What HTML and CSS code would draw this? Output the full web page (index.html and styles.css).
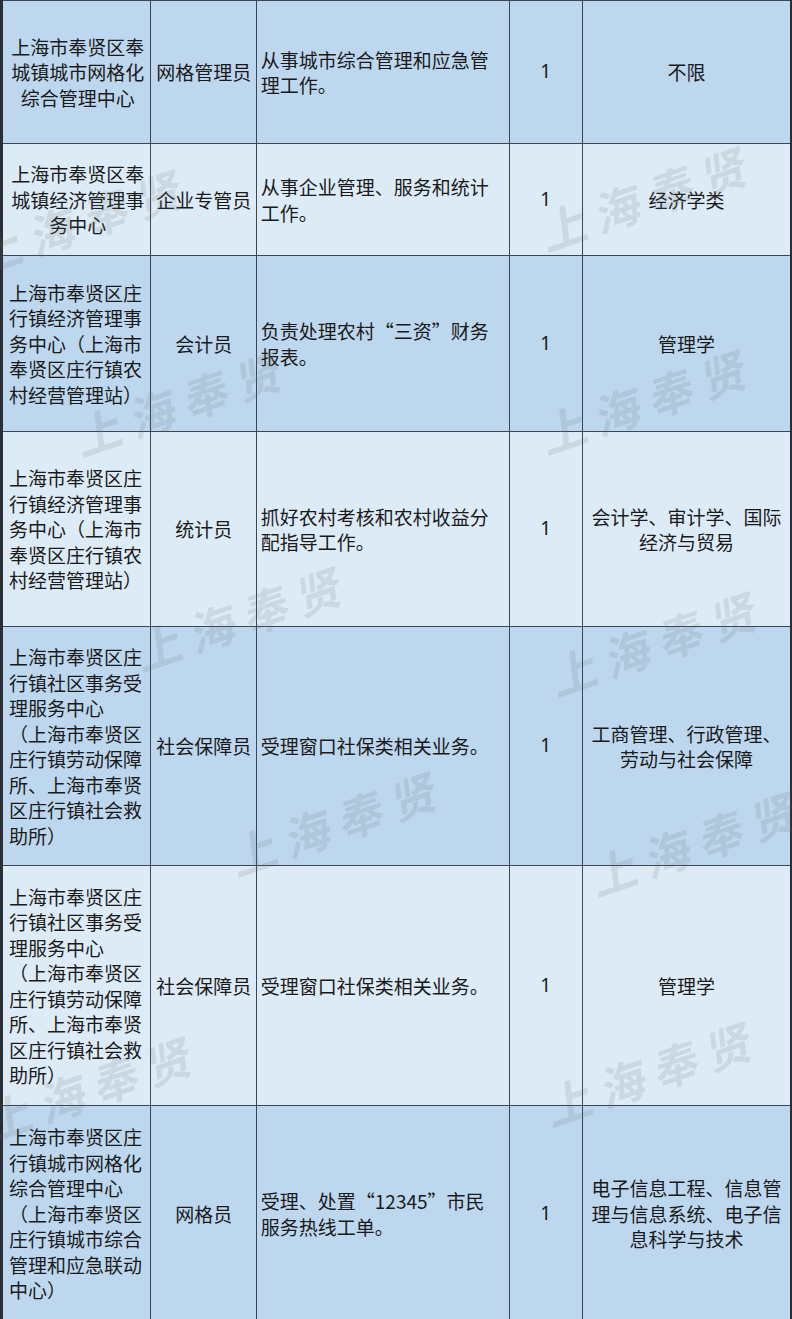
FILE: index.html
```html
<!DOCTYPE html>
<html lang="zh-CN">
<head>
<meta charset="utf-8">
<title>岗位表</title>
<link rel="stylesheet" href="styles.css">
</head>
<body>
<div class="page">
  <table class="jobs">
    <colgroup>
      <col class="c-unit"><col class="c-post"><col class="c-duty"><col class="c-num"><col class="c-major">
    </colgroup>
    <tbody>
      <tr class="row dark r1">
        <td class="unit center">上海市奉贤区奉城镇城市网格化综合管理中心</td>
        <td class="post">网格管理员</td>
        <td class="duty">从事城市综合管理和应急管理工作。</td>
        <td class="num">1</td>
        <td class="major">不限</td>
      </tr>
      <tr class="row light r2">
        <td class="unit center">上海市奉贤区奉城镇经济管理事务中心</td>
        <td class="post">企业专管员</td>
        <td class="duty">从事企业管理、服务和统计工作。</td>
        <td class="num">1</td>
        <td class="major">经济学类</td>
      </tr>
      <tr class="row dark r3">
        <td class="unit">上海市奉贤区庄行镇经济管理事务中心（上海市奉贤区庄行镇农村经营管理站）</td>
        <td class="post">会计员</td>
        <td class="duty">负责处理农村“三资”财务报表。</td>
        <td class="num">1</td>
        <td class="major">管理学</td>
      </tr>
      <tr class="row light r4">
        <td class="unit">上海市奉贤区庄行镇经济管理事务中心（上海市奉贤区庄行镇农村经营管理站）</td>
        <td class="post">统计员</td>
        <td class="duty">抓好农村考核和农村收益分配指导工作。</td>
        <td class="num">1</td>
        <td class="major">会计学、审计学、国际经济与贸易</td>
      </tr>
      <tr class="row dark r5">
        <td class="unit">上海市奉贤区庄行镇社区事务受理服务中心<br>（上海市奉贤区庄行镇劳动保障所、上海市奉贤区庄行镇社会救助所）</td>
        <td class="post">社会保障员</td>
        <td class="duty">受理窗口社保类相关业务。</td>
        <td class="num">1</td>
        <td class="major">工商管理、行政管理、劳动与社会保障</td>
      </tr>
      <tr class="row light r6">
        <td class="unit">上海市奉贤区庄行镇社区事务受理服务中心<br>（上海市奉贤区庄行镇劳动保障所、上海市奉贤区庄行镇社会救助所）</td>
        <td class="post">社会保障员</td>
        <td class="duty">受理窗口社保类相关业务。</td>
        <td class="num">1</td>
        <td class="major">管理学</td>
      </tr>
      <tr class="row dark r7">
        <td class="unit">上海市奉贤区庄行镇城市网格化综合管理中心<br>（上海市奉贤区庄行镇城市综合管理和应急联动中心）</td>
        <td class="post">网格员</td>
        <td class="duty">受理、处置“12345”市民服务热线工单。</td>
        <td class="num">1</td>
        <td class="major">电子信息工程、信息管理与信息系统、电子信息科学与技术</td>
      </tr>
    </tbody>
  </table>
  <div class="watermarks" aria-hidden="true">
    <span class="wm wm-a">上海奉贤</span>
    <span class="wm wm-b">上海奉贤</span>
    <span class="wm wm-c">上海奉贤</span>
    <span class="wm wm-d">上海奉贤</span>
    <span class="wm wm-e">上海奉贤</span>
    <span class="wm wm-f">上海奉贤</span>
    <span class="wm wm-g">上海奉贤</span>
    <span class="wm wm-h">上海奉贤</span>
    <span class="wm wm-i">上海奉贤</span>
    <span class="wm wm-j">上海奉贤</span>
  </div>
</div>
</body>
</html>
```

FILE: styles.css
```css
html, body {
  margin: 0;
  padding: 0;
  background: #ffffff;
}

.page {
  position: relative;
  width: 792px;
  height: 1319px;
  overflow: hidden;
  font-family: "Noto Sans CJK SC", "Noto Sans", sans-serif;
  color: #1a1a1a;
}

.jobs {
  width: 792px;
  table-layout: fixed;
  border-collapse: collapse;
  border-left: 3px solid #2a2f36;
  border-right: 2px solid #2a2f36;
  font-size: 19px;
  line-height: 25.5px;
}

.c-unit { width: 149px; }
.c-post { width: 105px; }
.c-duty { width: 252px; }
.c-num { width: 73px; }
.c-major { width: 208px; }

.jobs td {
  border: 1px solid #3a4654;
  vertical-align: middle;
  padding: 0;
  word-break: break-all;
}

.row.dark { background: #bdd7ee; }
.row.light { background: #ddebf7; }

.r1 { height: 143px; }
.r2 { height: 112px; }
.r3 { height: 176px; }
.r4 { height: 195px; }
.r5 { height: 239px; }
.r6 { height: 240px; }
.r7 { height: 216px; }

.unit {
  padding: 0 4px 0 6px !important;
  text-align: left;
}
.unit.center { text-align: center; }

.post {
  text-align: center;
  padding: 0 3px !important;
}

.duty {
  text-align: left;
  padding: 0 12px 0 4px !important;
}

.num {
  text-align: center;
  font-family: "Noto Sans", sans-serif;
}

.major {
  text-align: center;
  padding: 0 5px !important;
}

.watermarks {
  position: absolute;
  inset: 0;
  pointer-events: none;
}

.wm {
  position: absolute;
  font-family: "Noto Sans CJK SC", sans-serif;
  font-weight: 700;
  font-size: 46px;
  letter-spacing: 10px;
  line-height: 1;
  white-space: nowrap;
  color: rgba(110, 110, 110, 0.17);
  transform: translate(-50%, -50%) rotate(-19deg) skewX(-12deg);
}

.wm-a { left: 85px; top: 218px; }
.wm-b { left: 650px; top: 195px; }
.wm-c { left: 185px; top: 400px; }
.wm-d { left: 650px; top: 398px; }
.wm-e { left: 245px; top: 615px; }
.wm-f { left: 660px; top: 640px; }
.wm-g { left: 340px; top: 820px; }
.wm-h { left: 700px; top: 840px; }
.wm-i { left: 95px; top: 1085px; }
.wm-j { left: 655px; top: 1070px; }
```
